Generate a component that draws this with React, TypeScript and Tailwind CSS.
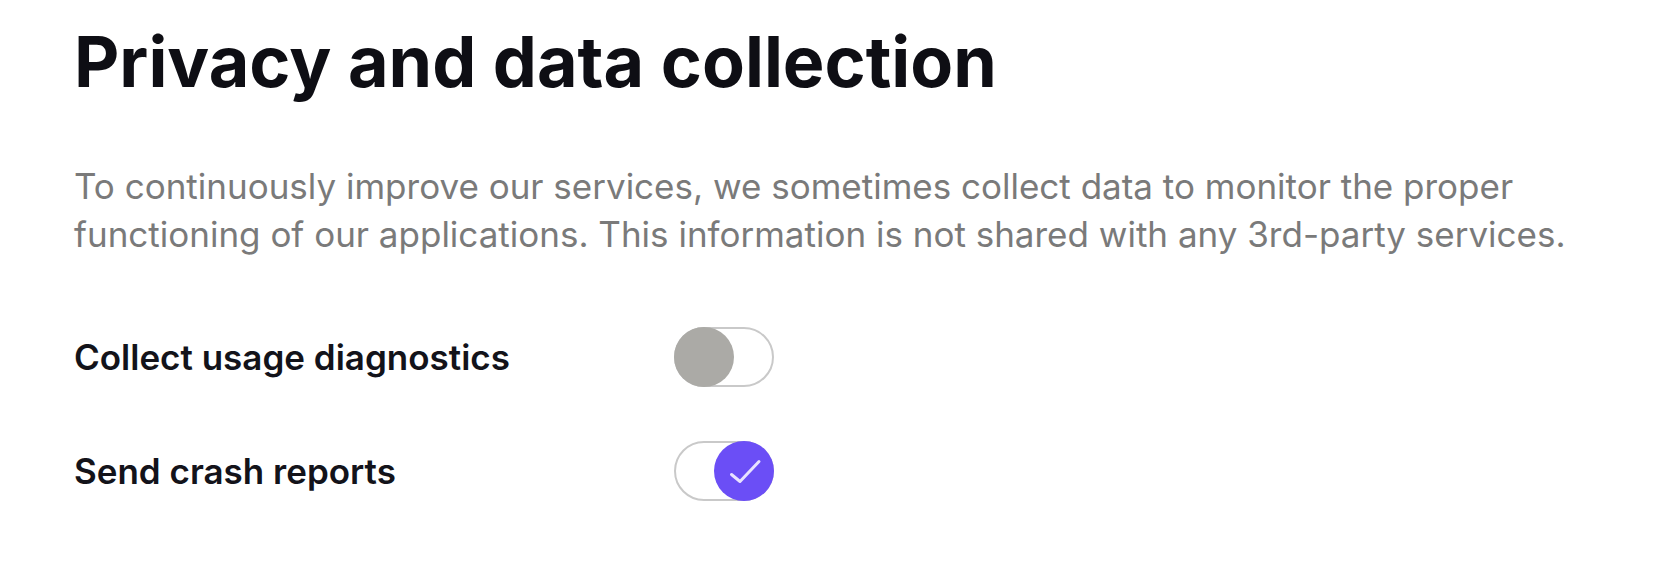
import React from "react";

function Toggle({ on }: { on: boolean }) {
  return (
    <button
      type="button"
      className={`flex h-[60px] w-[100px] items-center rounded-full border-2 border-[#c9c9c9] bg-white ${
        on ? "justify-end" : "justify-start"
      }`}
    >
      {on ? (
        <span className="-m-[2px] flex h-[60px] w-[60px] shrink-0 items-center justify-center rounded-full bg-[#6b4ef6]">
          <svg width="60" height="60" viewBox="0 0 60 60" fill="none" stroke="#e8e2ff" strokeWidth="3" strokeLinecap="round" strokeLinejoin="round">
            <path d="M17.5 33.5L26 40.5L45 20.5" />
          </svg>
        </span>
      ) : (
        <span className="-m-[2px] h-[60px] w-[60px] shrink-0 rounded-full bg-[#abaaa6]" />
      )}
    </button>
  );
}

export default function App() {
  return (
    <div className="min-h-screen bg-white pl-[74px] pt-[22px] font-['Inter',sans-serif]">
      <h1 className="text-[70px] font-bold leading-[80px] text-[#0e0e14]">Privacy and data collection</h1>
      <p className="mt-[60px] max-w-[1540px] text-[35px] leading-[48px] text-[#7a7a7a]">
        To continuously improve our services, we sometimes collect data to monitor the proper functioning of our
        applications. This information is not shared with any 3rd-party services.
      </p>
      <div className="mt-[69px] grid grid-cols-[600px_100px] items-center gap-y-[54px]">
        <span className="text-[35px] font-semibold text-[#13131a]">Collect usage diagnostics</span>
        <Toggle on={false} />
        <span className="text-[35px] font-semibold text-[#13131a]">Send crash reports</span>
        <Toggle on={true} />
      </div>
    </div>
  );
}
